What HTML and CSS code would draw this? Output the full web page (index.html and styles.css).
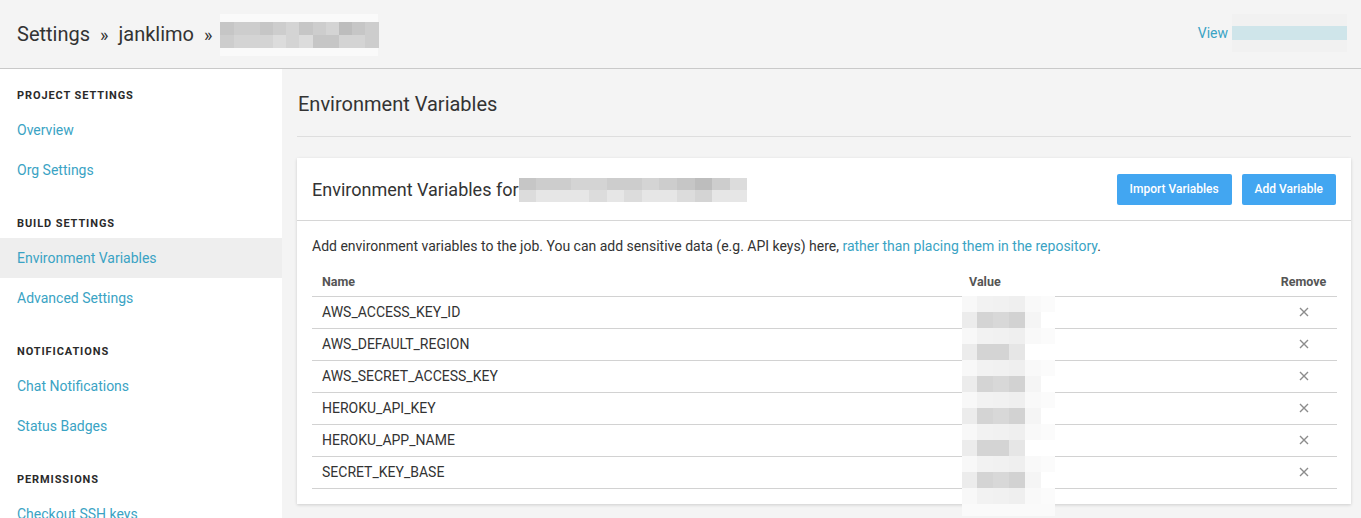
FILE: index.html
```html
<!DOCTYPE html>
<html>
<head>
<meta charset="utf-8">
<link rel="stylesheet" href="styles.css">
</head>
<body>
<header class="topbar">
  <div class="crumbs">
    <span>Settings</span><span class="sep">»</span><span>janklimo</span><span class="sep">»</span>
    <span class="redact crumb-redact">
      <span class="rrow r-light"></span>
      <span class="rrow"><i class="g2"></i><i class="g3"></i><i class="g3"></i><i class="g2"></i><i class="g3"></i><i class="g4"></i><i class="g2"></i><i class="g3"></i><i class="g4"></i><i class="g1"></i><i class="g2"></i><i class="g3"></i></span>
      <span class="rrow"><i class="g3"></i><i class="g4"></i><i class="g4"></i><i class="g4"></i><i class="g5"></i><i class="g4"></i><i class="g5"></i><i class="g2"></i><i class="g2"></i><i class="g4"></i><i class="g4"></i><i class="g3"></i></span>
      <span class="rrow r-light"></span>
    </span>
  </div>
  <div class="view">
    <a href="#" class="link">View</a>
    <span class="view-redact"></span>
  </div>
</header>
<div class="layout">
  <nav class="sidebar">
    <section class="nav-section">
      <h4>PROJECT SETTINGS</h4>
      <a class="nav-link" href="#">Overview</a>
      <a class="nav-link" href="#">Org Settings</a>
    </section>
    <section class="nav-section">
      <h4>BUILD SETTINGS</h4>
      <a class="nav-link active" href="#">Environment Variables</a>
      <a class="nav-link" href="#">Advanced Settings</a>
    </section>
    <section class="nav-section">
      <h4>NOTIFICATIONS</h4>
      <a class="nav-link" href="#">Chat Notifications</a>
      <a class="nav-link" href="#">Status Badges</a>
    </section>
    <section class="nav-section">
      <h4>PERMISSIONS</h4>
      <a class="nav-link" href="#">Checkout SSH keys</a>
    </section>
  </nav>
  <main class="main">
    <h1 class="page-title">Environment Variables</h1>
    <div class="card">
      <div class="card-head">
        <h2 class="card-title">Environment Variables for<span class="redact title-redact"><span class="rrow"><i class="g2"></i><i class="g3"></i><i class="g3"></i><i class="g4"></i><i class="g4"></i><i class="g3"></i><i class="g3"></i><i class="g4"></i><i class="g3"></i><i class="g2"></i><i class="g1"></i><i class="g3"></i><i class="g5"></i></span><span class="rrow"><i class="g5"></i><i class="g6"></i><i class="g6"></i><i class="g6"></i><i class="g5"></i><i class="g6"></i><i class="g5"></i><i class="g6"></i><i class="g6"></i><i class="g5"></i><i class="g4"></i><i class="g6"></i><i class="g6"></i></span></span></h2>
        <div class="actions">
          <button class="btn">Import Variables</button>
          <button class="btn">Add Variable</button>
        </div>
      </div>
      <div class="card-body">
        <p class="desc">Add environment variables to the job. You can add sensitive data (e.g. API keys) here, <a href="#" class="link">rather than placing them in the repository</a>.</p>
        <div class="table">
          <div class="row thead">
            <div class="cell">Name</div>
            <div class="cell">Value</div>
            <div class="cell remove-col">Remove</div>
          </div>
          <div class="row"><div class="cell">AWS_ACCESS_KEY_ID</div><div class="cell"></div><div class="cell remove-col"><svg class="x" viewBox="0 0 10 10" width="10" height="10"><path d="M1 1L9 9M9 1L1 9"/></svg></div></div>
          <div class="row"><div class="cell">AWS_DEFAULT_REGION</div><div class="cell"></div><div class="cell remove-col"><svg class="x" viewBox="0 0 10 10" width="10" height="10"><path d="M1 1L9 9M9 1L1 9"/></svg></div></div>
          <div class="row"><div class="cell">AWS_SECRET_ACCESS_KEY</div><div class="cell"></div><div class="cell remove-col"><svg class="x" viewBox="0 0 10 10" width="10" height="10"><path d="M1 1L9 9M9 1L1 9"/></svg></div></div>
          <div class="row"><div class="cell">HEROKU_API_KEY</div><div class="cell"></div><div class="cell remove-col"><svg class="x" viewBox="0 0 10 10" width="10" height="10"><path d="M1 1L9 9M9 1L1 9"/></svg></div></div>
          <div class="row"><div class="cell">HEROKU_APP_NAME</div><div class="cell"></div><div class="cell remove-col"><svg class="x" viewBox="0 0 10 10" width="10" height="10"><path d="M1 1L9 9M9 1L1 9"/></svg></div></div>
          <div class="row"><div class="cell">SECRET_KEY_BASE</div><div class="cell"></div><div class="cell remove-col"><svg class="x" viewBox="0 0 10 10" width="10" height="10"><path d="M1 1L9 9M9 1L1 9"/></svg></div></div>
          <div class="value-redact">
            <span class="vrow top"></span><span class="vrow bot"></span>
            <span class="vrow top"></span><span class="vrow bot b2"></span>
            <span class="vrow top"></span><span class="vrow bot"></span>
            <span class="vrow top"></span><span class="vrow bot"></span>
            <span class="vrow top"></span><span class="vrow bot b2"></span>
            <span class="vrow top"></span><span class="vrow bot"></span>
            <span class="vrow top"></span><span class="vrow last"></span>
          </div>
        </div>
      </div>
    </div>
  </main>
</div>
</body>
</html>
```
FILE: styles.css
```css
* { box-sizing: border-box; }
html, body { margin: 0; padding: 0; }
body {
  font-family: Roboto, "Liberation Sans", Arial, sans-serif;
  color: #333;
  background: #f4f4f4;
  width: 1361px;
  height: 518px;
  overflow: hidden;
}
a { text-decoration: none; }
.link { color: #3aa3c4; }

.topbar {
  height: 69px;
  border-bottom: 1px solid #c9c9c9;
  background: #f4f4f4;
  display: flex;
  align-items: center;
  justify-content: space-between;
  padding: 0 14px 0 17px;
}
.crumbs {
  display: flex;
  align-items: center;
  font-size: 20px;
  color: #333;
}
.crumbs .sep { margin: 0 10px; font-size: 18px; }
.redact { display: inline-flex; flex-direction: column; }
.rrow { display: flex; }
.rrow i { display: block; flex: 1; }
.crumb-redact { width: 158px; height: 42px; margin-left: -2px; margin-top: 2px; }
.crumb-redact .rrow { height: 13px; }
.crumb-redact .r-light { height: 8px; background: #fafafa; }
.g1 { background: #bdbdbd; }
.g2 { background: #c6c6c6; }
.g3 { background: #cdcdcd; }
.g4 { background: #d4d4d4; }
.g5 { background: #dcdcdc; }
.g6 { background: #e6e6e6; }

.view { display: flex; align-items: center; font-size: 14px; margin-top: -3px; }
.view-redact {
  display: block;
  width: 115px;
  height: 14px;
  margin-left: 4px;
  background: #cfe5ea;
  box-shadow: 0 -12px 0 0 #f1f1f1, 0 12px 0 0 #f1f1f1;
}

.layout { display: flex; height: 449px; }
.sidebar {
  width: 282px;
  flex: none;
  background: #fff;
  padding-top: 18.5px;
}
.nav-section + .nav-section { margin-top: 26.3px; }
.nav-section h4 {
  margin: 0 0 6px;
  padding: 0 17px;
  font-size: 11px;
  line-height: 16px;
  font-weight: 700;
  letter-spacing: 0.9px;
  color: #2a2a2a;
}
.nav-link {
  display: block;
  height: 40px;
  line-height: 40px;
  padding: 0 17px;
  font-size: 14px;
  color: #3aa3c4;
}
.nav-link.active { background: #eeeeee; }

.main {
  flex: 1;
  padding: 23px 10px 0 15px;
}
.page-title {
  margin: 0;
  font-size: 20px;
  line-height: 24px;
  font-weight: 400;
  color: #333;
  padding: 0 0 20px 1px;
  border-bottom: 1px solid #dedede;
}
.card {
  margin-top: 21px;
  background: #fff;
  box-shadow: 0 1px 3px rgba(0,0,0,0.16);
}
.card-head {
  display: flex;
  align-items: center;
  justify-content: space-between;
  padding: 15px 15px;
  border-bottom: 1px solid #d6d6d6;
  height: 63px;
}
.card-title {
  margin: 0;
  font-size: 18px;
  font-weight: 400;
  color: #333;
  display: flex;
  align-items: center;
}
.title-redact { width: 229px; height: 24px; margin-left: 0; margin-top: 2px; }
.title-redact .rrow { height: 12px; }
.actions { display: flex; gap: 10px; }
.btn {
  font-family: inherit;
  font-size: 12px;
  font-weight: 500;
  color: #fff;
  background: #42a6f1;
  border: 0;
  border-radius: 2px;
  height: 31px;
  padding: 0 13px;
}
.card-body { padding: 15px 14px 15px 15px; }
.desc {
  margin: 0;
  font-size: 14px;
  line-height: 20px;
  color: #333;
}
.table { margin-top: 10px; position: relative; }
.row {
  display: grid;
  grid-template-columns: 647px 1fr 67px;
  height: 32px;
  padding-bottom: 1px;
  border-bottom: 1px solid #d2d2d2;
  align-items: center;
  font-size: 14px;
  color: #333;
}
.row.thead {
  height: 31px;
  padding-bottom: 0;
  font-size: 12.5px;
  font-weight: 700;
  color: #555;
}
.cell { padding: 0 10px; }
.remove-col { text-align: center; padding: 0; display: flex; justify-content: center; align-items: center; }
.x { display: block; fill: none; stroke: #8c8c8c; stroke-width: 1.4; }

.value-redact {
  position: absolute;
  left: 650px;
  top: 30px;
  width: 93px;
  display: flex;
  flex-direction: column;
}
.vrow { display: block; height: 16px; }
.vrow.top { background: linear-gradient(90deg, #f8f8f8 0 15px, #f2f2f2 15px 31px, #f1f1f1 31px 47px, #efefef 47px 63px, #f9f9f9 63px 79px, #fbfbfb 79px); }
.vrow.bot { background: linear-gradient(90deg, #ececec 0 15px, #d4d4d4 15px 31px, #d8d8d8 31px 47px, #d2d2d2 47px 63px, #f5f5f5 63px 79px, #ffffff 79px); }
.vrow.b2 { background: linear-gradient(90deg, #ececec 0 15px, #d4d4d4 15px 31px, #d4d4d4 31px 47px, #e6e6e6 47px 63px, #ffffff 63px); }
.vrow.last { height: 12px; background: #fafafa; }
```
